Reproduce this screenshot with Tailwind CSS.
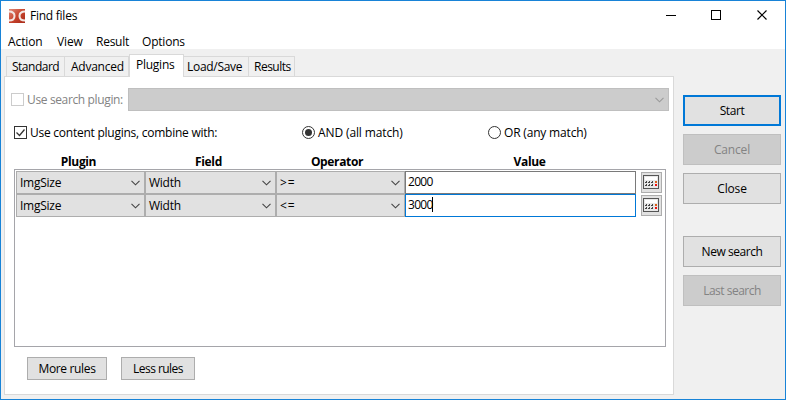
<!DOCTYPE html>
<html lang="en">
<head>
<meta charset="utf-8">
<title>Find files</title>
<script src="https://cdn.jsdelivr.net/npm/@tailwindcss/browser@4"></script>
</head>
<body class="w-[786px] h-[400px] overflow-hidden">
<svg class="hidden">
  <symbol id="chev" viewBox="0 0 9 6"><path d="M0.5 0.8L4.5 4.8L8.5 0.8" fill="none" stroke="currentColor" stroke-width="1.1"/></symbol>
  <symbol id="calc" viewBox="0 0 17 15" shape-rendering="crispEdges">
    <rect x="0.5" y="0.5" width="15" height="13" fill="#e8e8e8" stroke="#555"/>
    <rect x="2" y="2" width="12" height="3" fill="#fff"/>
    <path d="M3 6h1v1h-1zM6 6h1v1h-1zM9 6h1v1h-1zM2 7h2v1h-2zM5 7h2v1h-2zM8 7h2v1h-2zM3 9h1v1h-1zM6 9h1v1h-1zM9 9h1v1h-1zM2 10h2v1h-2zM5 10h2v1h-2zM8 10h2v1h-2z" fill="#444"/>
    <path d="M12 6h2v2h-2z" fill="#d9601a"/>
    <path d="M12 9h2v2h-2z" fill="#f01010"/>
  </symbol>
</svg>
<div class="w-[786px] h-[400px] border border-[#1883d7] bg-[#f0f0f0] text-black text-[12px] leading-[16px] font-['Open_Sans','Noto_Sans',sans-serif] tracking-[-0.25px] whitespace-nowrap flex flex-col">
  <header class="bg-white h-[48px] shrink-0">
    <div class="flex h-[29px] items-center pl-2">
      <svg class="w-4 h-4 mr-[5px]" viewBox="0 0 16 16">
        <defs><linearGradient id="red" x1="0" y1="0" x2="1" y2="1"><stop offset="0" stop-color="#e08a78"/><stop offset=".5" stop-color="#c8452e"/><stop offset="1" stop-color="#a82a18"/></linearGradient></defs>
        <rect y="1" width="16" height="14" fill="url(#red)"/>
        <path d="M0 3.500C3.500 3.500 5.500 5.300 5.500 8S3.500 12.500 0 12.500M16 3.500C12.500 3.500 10.500 5.300 10.500 8S12.500 12.500 16 12.500" fill="none" stroke="#f2e6e2" stroke-width="2"/>
      </svg>
      <span class="grow">Find files</span>
      <svg class="w-[103px] h-[11px] mr-[17px]" viewBox="0 0 103 11" fill="none" stroke="#000"><path d="M1 5.500h10M46.500 .500h9v9h-9z" shape-rendering="crispEdges"/><path d="M92.500 .500l9 9M101.500 .500l-9 9" stroke-width="1.200"/></svg>
    </div>
    <nav class="flex pl-[7px] pt-1 tracking-[-0.1px]"><span class="w-[49px]">Action</span><span class="w-[39px]">View</span><span class="w-[46px] tracking-[-0.25px]">Result</span><span class="tracking-[-0.2px]">Options</span></nav>
  </header>
  <div class="flex grow">
    <main class="w-[670px] ml-[3px] flex flex-col">
      <div class="flex items-end h-[28px] pl-[2px] relative -mb-px">
        <div class="w-[59px] h-[21px] border border-[#d9d9d9] pl-[5px] pt-[2px] tracking-[-0.5px]">Standard</div>
        <div class="w-[64px] h-[21px] border border-l-0 border-[#d9d9d9] pl-[6px] pt-[2px] tracking-[-0.25px]">Advanced</div>
        <div class="w-[55px] h-[23px] border border-b-0 border-[#d9d9d9] bg-white pl-[6px] pt-[2px] tracking-[-0.25px]">Plugins</div>
        <div class="w-[65px] h-[21px] border border-l-0 border-[#d9d9d9] pl-[3px] pt-[2px] tracking-[-0.3px]">Load/Save</div>
        <div class="w-[46px] h-[21px] border border-l-0 border-[#d9d9d9] pl-[5px] pt-[2px] tracking-[-0.5px]">Results</div>
      </div>
      <section class="h-[319px] border border-[#d9d9d9] bg-white pl-[9px] pt-[11px]">
        <div class="flex h-[23px] items-center -ml-[3px] text-[#838383]">
          <span class="w-[13px] h-[13px] border border-[#ccc]"></span><span class="w-[101px] ml-[3px] tracking-[-0.36px]">Use search plugin:</span>
          <div class="w-[541px] h-[23px] border border-[#bfbfbf] bg-[#ccc] flex items-center justify-end pr-1 text-[#9a9a9a]"><svg class="w-[9px] h-[6px]"><use href="#chev"/></svg></div>
        </div>
        <div class="flex h-[17px] items-center mt-[13px]">
          <svg class="w-[13px] h-[13px]" viewBox="0 0 13 13" fill="none" stroke="#333"><rect x=".5" y=".5" width="12" height="12"/><path d="M2.500 6.500l3 3l5-6" stroke-width="1.300"/></svg>
          <span class="w-[272px] ml-[3px]">Use content plugins, combine with:</span>
          <svg class="w-[13px] h-[13px]" viewBox="0 0 13 13"><circle cx="6.500" cy="6.500" r="6" fill="#fff" stroke="#333"/><circle cx="6.500" cy="6.500" r="3.500" fill="#333"/></svg>
          <span class="w-[170px] ml-[3px] tracking-[-0.12px]">AND (all match)</span>
          <svg class="w-[13px] h-[13px]" viewBox="0 0 13 13"><circle cx="6.500" cy="6.500" r="6" fill="#fff" stroke="#333"/></svg>
          <span class="ml-[3px] tracking-[-0.18px]">OR (any match)</span>
        </div>
        <div class="flex h-[16px] mt-[13px] font-bold text-center tracking-[-0.35px]"><span class="w-[129px]">Plugin</span><span class="w-[131px]">Field</span><span class="w-[126px]">Operator</span><span class="w-[259px]">Value</span></div>
        <div class="w-[652px] h-[178px] mt-[-1px] border border-[#a5a5aa] p-px">
          <div class="flex h-[23px]">
            <div class="w-[129px] border border-[#adadad] bg-[#e1e1e1] flex items-center justify-between pl-[3px] pr-1">ImgSize<svg class="w-[9px] h-[6px] text-[#444]"><use href="#chev"/></svg></div>
            <div class="w-[131px] border border-[#adadad] bg-[#e1e1e1] flex items-center justify-between pl-[3px] pr-1">Width<svg class="w-[9px] h-[6px] text-[#444]"><use href="#chev"/></svg></div>
            <div class="w-[129px] border border-[#adadad] bg-[#e1e1e1] flex items-center justify-between pl-[3px] pr-1"><span class="tracking-[1px]">&gt;=</span><svg class="w-[9px] h-[6px] text-[#444]"><use href="#chev"/></svg></div>
            <div class="w-[231px] border border-[#7a7a7a] pl-[2px] pt-[2px] tracking-[-0.7px]">2000</div>
            <div class="w-[21px] h-[21px] ml-[5px] mt-px border border-[#adadad] bg-[#e1e1e1] pl-px pt-[2px]"><svg class="w-[17px] h-[15px]"><use href="#calc"/></svg></div>
          </div>
          <div class="flex h-[23px]">
            <div class="w-[129px] border border-[#adadad] bg-[#e1e1e1] flex items-center justify-between pl-[3px] pr-1">ImgSize<svg class="w-[9px] h-[6px] text-[#444]"><use href="#chev"/></svg></div>
            <div class="w-[131px] border border-[#adadad] bg-[#e1e1e1] flex items-center justify-between pl-[3px] pr-1">Width<svg class="w-[9px] h-[6px] text-[#444]"><use href="#chev"/></svg></div>
            <div class="w-[129px] border border-[#adadad] bg-[#e1e1e1] flex items-center justify-between pl-[3px] pr-1"><span class="tracking-[1px]">&lt;=</span><svg class="w-[9px] h-[6px] text-[#444]"><use href="#chev"/></svg></div>
            <div class="w-[231px] border border-[#0078d7] pl-[2px] pt-[2px] flex tracking-[-0.7px]"><span class="w-[24px]">3000</span><span class="w-px h-[15px] bg-black"></span></div>
            <div class="w-[21px] h-[21px] ml-[5px] mt-px border border-[#adadad] bg-[#e1e1e1] pl-px pt-[2px]"><svg class="w-[17px] h-[15px]"><use href="#calc"/></svg></div>
          </div>
        </div>
        <div class="flex gap-[14px] mt-[10px] pl-[13px]">
          <button class="w-[80px] h-[23px] border border-[#adadad] bg-[#e1e1e1] tracking-[-0.35px]">More rules</button>
          <button class="w-[74px] h-[23px] border border-[#adadad] bg-[#e1e1e1] tracking-[-0.55px]">Less rules</button>
        </div>
      </section>
    </main>
    <aside class="ml-[9px] pt-[46px] flex flex-col gap-2">
      <button class="w-[98px] h-[31px] border-2 border-[#0078d7] bg-[#e1e1e1] tracking-[-0.4px]">Start</button>
      <button class="w-[98px] h-[31px] border border-[#bfbfbf] bg-[#ccc] text-[#838383] tracking-[-0.15px]">Cancel</button>
      <button class="w-[98px] h-[31px] border border-[#adadad] bg-[#e1e1e1] tracking-[-0.15px]">Close</button>
      <button class="w-[98px] h-[31px] mt-6 border border-[#adadad] bg-[#e1e1e1] tracking-[-0.45px]">New search</button>
      <button class="w-[98px] h-[31px] border border-[#bfbfbf] bg-[#ccc] text-[#838383] tracking-[-0.5px]">Last search</button>
    </aside>
  </div>
</div>
</body>
</html>
